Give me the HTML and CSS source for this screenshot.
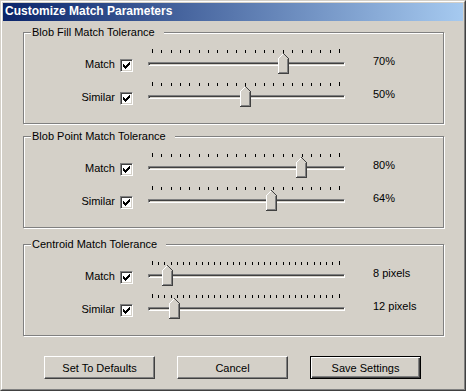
FILE: index.html
```html
<!DOCTYPE html>
<html>
<head>
<meta charset="utf-8">
<title>Customize Match Parameters</title>
<link rel="stylesheet" href="styles.css">
</head>
<body>
<div class="window">
<div class="frame">
	<div class="caption">Customize Match Parameters</div>
	<div class="client">

		<!-- blob fill -->
		<div class="group">
			<span class="legend">Blob Fill Match Tolerance</span>
			<div class="row">
				<label>Match</label>
				<span class="check"><svg width="11" height="11" viewBox="0 0 11 11"><path d="M2 4h1v3H2zM3 5h1v3H3zM4 6h1v3H4zM5 5h1v3H5zM6 4h1v3H6zM7 3h1v3H7zM8 2h1v3H8z"/></svg></span>
				<div class="slider">
					<div class="ticks"><i></i><i></i><i></i><i></i><i></i><i></i><i></i><i></i><i></i><i></i><i></i><i></i><i></i><i></i><i></i><i></i><i></i><i></i><i></i><i></i><i></i></div>
					<div class="track"></div>
					<span class="thumb" style="left:131px"><svg width="11" height="21" viewBox="0 0 11 21" shape-rendering="crispEdges"><path d="M0 5L5 0L10 5V20H0Z" fill="#d4d0c8"/><path d="M0.5 20V5.5L5.5 0.5" stroke="#fff" fill="none"/><path d="M5.5 0.5L10.5 5.5V20.5H0" stroke="#404040" fill="none"/><path d="M9.5 6V19.5H1" stroke="#808080" fill="none"/></svg></span>
				</div>
				<span class="value">70%</span>
			</div>
			<div class="row">
				<label>Similar</label>
				<span class="check"><svg width="11" height="11" viewBox="0 0 11 11"><path d="M2 4h1v3H2zM3 5h1v3H3zM4 6h1v3H4zM5 5h1v3H5zM6 4h1v3H6zM7 3h1v3H7zM8 2h1v3H8z"/></svg></span>
				<div class="slider">
					<div class="ticks"><i></i><i></i><i></i><i></i><i></i><i></i><i></i><i></i><i></i><i></i><i></i><i></i><i></i><i></i><i></i><i></i><i></i><i></i><i></i><i></i><i></i></div>
					<div class="track"></div>
					<span class="thumb" style="left:93px"><svg width="11" height="21" viewBox="0 0 11 21" shape-rendering="crispEdges"><path d="M0 5L5 0L10 5V20H0Z" fill="#d4d0c8"/><path d="M0.5 20V5.5L5.5 0.5" stroke="#fff" fill="none"/><path d="M5.5 0.5L10.5 5.5V20.5H0" stroke="#404040" fill="none"/><path d="M9.5 6V19.5H1" stroke="#808080" fill="none"/></svg></span>
				</div>
				<span class="value">50%</span>
			</div>
		</div>

		<!-- blob point -->
		<div class="group second">
			<span class="legend">Blob Point Match Tolerance</span>
			<div class="row">
				<label>Match</label>
				<span class="check"><svg width="11" height="11" viewBox="0 0 11 11"><path d="M2 4h1v3H2zM3 5h1v3H3zM4 6h1v3H4zM5 5h1v3H5zM6 4h1v3H6zM7 3h1v3H7zM8 2h1v3H8z"/></svg></span>
				<div class="slider">
					<div class="ticks"><i></i><i></i><i></i><i></i><i></i><i></i><i></i><i></i><i></i><i></i><i></i><i></i><i></i><i></i><i></i><i></i><i></i><i></i><i></i><i></i><i></i></div>
					<div class="track"></div>
					<span class="thumb" style="left:149px"><svg width="11" height="21" viewBox="0 0 11 21" shape-rendering="crispEdges"><path d="M0 5L5 0L10 5V20H0Z" fill="#d4d0c8"/><path d="M0.5 20V5.5L5.5 0.5" stroke="#fff" fill="none"/><path d="M5.5 0.5L10.5 5.5V20.5H0" stroke="#404040" fill="none"/><path d="M9.5 6V19.5H1" stroke="#808080" fill="none"/></svg></span>
				</div>
				<span class="value">80%</span>
			</div>
			<div class="row">
				<label>Similar</label>
				<span class="check"><svg width="11" height="11" viewBox="0 0 11 11"><path d="M2 4h1v3H2zM3 5h1v3H3zM4 6h1v3H4zM5 5h1v3H5zM6 4h1v3H6zM7 3h1v3H7zM8 2h1v3H8z"/></svg></span>
				<div class="slider">
					<div class="ticks"><i></i><i></i><i></i><i></i><i></i><i></i><i></i><i></i><i></i><i></i><i></i><i></i><i></i><i></i><i></i><i></i><i></i><i></i><i></i><i></i><i></i></div>
					<div class="track"></div>
					<span class="thumb" style="left:119px"><svg width="11" height="21" viewBox="0 0 11 21" shape-rendering="crispEdges"><path d="M0 5L5 0L10 5V20H0Z" fill="#d4d0c8"/><path d="M0.5 20V5.5L5.5 0.5" stroke="#fff" fill="none"/><path d="M5.5 0.5L10.5 5.5V20.5H0" stroke="#404040" fill="none"/><path d="M9.5 6V19.5H1" stroke="#808080" fill="none"/></svg></span>
				</div>
				<span class="value">64%</span>
			</div>
		</div>

		<!-- centroid -->
		<div class="group third">
			<span class="legend">Centroid Match Tolerance</span>
			<div class="row">
				<label>Match</label>
				<span class="check"><svg width="11" height="11" viewBox="0 0 11 11"><path d="M2 4h1v3H2zM3 5h1v3H3zM4 6h1v3H4zM5 5h1v3H5zM6 4h1v3H6zM7 3h1v3H7zM8 2h1v3H8z"/></svg></span>
				<div class="slider">
					<div class="ticks"><i></i><i></i><i></i><i></i><i></i><i></i><i></i><i></i><i></i><i></i><i></i><i></i><i></i><i></i><i></i><i></i><i></i><i></i><i></i><i></i><i></i><i></i><i></i><i></i><i></i><i></i><i></i><i></i><i></i><i></i><i></i></div>
					<div class="track"></div>
					<span class="thumb" style="left:15px"><svg width="11" height="21" viewBox="0 0 11 21" shape-rendering="crispEdges"><path d="M0 5L5 0L10 5V20H0Z" fill="#d4d0c8"/><path d="M0.5 20V5.5L5.5 0.5" stroke="#fff" fill="none"/><path d="M5.5 0.5L10.5 5.5V20.5H0" stroke="#404040" fill="none"/><path d="M9.5 6V19.5H1" stroke="#808080" fill="none"/></svg></span>
				</div>
				<span class="value">8 pixels</span>
			</div>
			<div class="row">
				<label>Similar</label>
				<span class="check"><svg width="11" height="11" viewBox="0 0 11 11"><path d="M2 4h1v3H2zM3 5h1v3H3zM4 6h1v3H4zM5 5h1v3H5zM6 4h1v3H6zM7 3h1v3H7zM8 2h1v3H8z"/></svg></span>
				<div class="slider">
					<div class="ticks"><i></i><i></i><i></i><i></i><i></i><i></i><i></i><i></i><i></i><i></i><i></i><i></i><i></i><i></i><i></i><i></i><i></i><i></i><i></i><i></i><i></i><i></i><i></i><i></i><i></i><i></i><i></i><i></i><i></i><i></i><i></i></div>
					<div class="track"></div>
					<span class="thumb" style="left:22px"><svg width="11" height="21" viewBox="0 0 11 21" shape-rendering="crispEdges"><path d="M0 5L5 0L10 5V20H0Z" fill="#d4d0c8"/><path d="M0.5 20V5.5L5.5 0.5" stroke="#fff" fill="none"/><path d="M5.5 0.5L10.5 5.5V20.5H0" stroke="#404040" fill="none"/><path d="M9.5 6V19.5H1" stroke="#808080" fill="none"/></svg></span>
				</div>
				<span class="value">12 pixels</span>
			</div>
		</div>

		<div class="buttons">
			<button class="btn">Set To Defaults</button>
			<button class="btn">Cancel</button>
			<button class="btn default">Save Settings</button>
		</div>
	</div>
</div>
</div>
</body>
</html>
```

FILE: styles.css
```css
* { margin: 0; padding: 0; }

body { background: #d4d0c8; font: 11px "Liberation Sans", Arial, sans-serif; color: #000; }

/* window frame */
.window { width: 466px; height: 391px; box-sizing: border-box; border: 1px solid; border-color: #d4d0c8 #404040 #404040 #d4d0c8; background: #d4d0c8; }
.frame { height: 100%; box-sizing: border-box; border: 1px solid; border-color: #fff #808080 #808080 #fff; padding: 1px; }
.caption { height: 18px; line-height: 16px; padding-left: 2px; color: #fff; font-size: 12px; font-weight: bold; background: linear-gradient(to right, #0a246a, #a6caf0); }
.client { padding: 11px 19px 0 20px; }

/* group boxes */
.group { position: relative; height: 92px; box-sizing: border-box; padding-top: 15px; border: 1px solid #808080; box-shadow: inset 1px 1px #fff, 1px 1px #fff; }
.group.second { margin-top: 12px; }
.group.third { margin-top: 16px; }
.legend { position: absolute; left: 7px; top: -7px; padding: 0 9px 0 1px; line-height: 13px; background: #d4d0c8; white-space: nowrap; }

.row { display: grid; grid-template-columns: 96px 27px 226px 1fr; align-items: start; height: 28px; }
.row + .row { margin-top: 5px; }
.row label { padding-right: 5px; margin-top: 10px; line-height: 13px; text-align: right; }
.row .value { margin-top: 7px; line-height: 13px; white-space: nowrap; }

/* checkbox */
.check { width: 13px; height: 13px; margin-top: 11px; box-sizing: border-box; border: 1px solid; border-color: #808080 #fff #fff #808080; box-shadow: inset 1px 1px #404040, inset -1px -1px #d4d0c8; background: #fff; }
.check svg { display: block; }

/* trackbar */
.slider { position: relative; width: 198px; height: 28px; }
.ticks { display: flex; justify-content: space-between; height: 4px; margin: 1px 5px 0; }
.ticks i { width: 1px; height: 3px; margin-top: 1px; background: #000; }
.ticks i:first-child, .ticks i:last-child { height: 4px; margin-top: 0; }
.track { height: 4px; margin: 9px 0 0 1px; box-sizing: border-box; border: 1px solid; border-color: #808080 #fff #fff #808080; box-shadow: inset 1px 1px #404040, inset -1px -1px #d4d0c8; }
.thumb { position: absolute; top: 5px; }
.thumb svg { display: block; }

/* buttons */
.buttons { display: flex; gap: 22px; margin-top: 20px; padding-left: 21px; }
.btn { width: 111px; height: 23px; box-sizing: border-box; font: inherit; color: #000; background: #d4d0c8; border: 1px solid; border-color: #fff #404040 #404040 #fff; box-shadow: inset -1px -1px #808080; }
.btn.default { border-color: #000; box-shadow: inset 1px 1px #fff, inset -1px -1px #404040, inset -2px -2px #808080; }
```
